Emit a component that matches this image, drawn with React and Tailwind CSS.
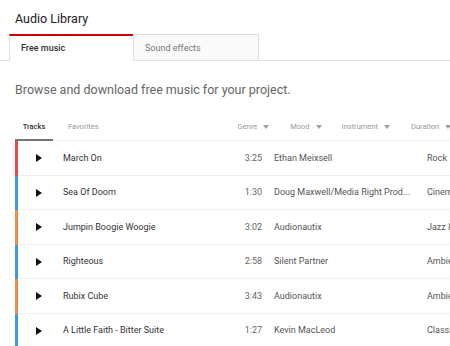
const tracks = [
  { title: 'March On', time: '3:25', artist: 'Ethan Meixsell', genre: 'Rock', bar: 'bg-[#e94a4a]' },
  { title: 'Sea Of Doom', time: '1:30', artist: 'Doug Maxwell/Media Right Prod...', genre: 'Cinematic', bar: 'bg-[#3a9be3]' },
  { title: 'Jumpin Boogie Woogie', time: '3:02', artist: 'Audionautix', genre: 'Jazz & Blues', bar: 'bg-[#ef8c4a]' },
  { title: 'Righteous', time: '2:58', artist: 'Silent Partner', genre: 'Ambient', bar: 'bg-[#3a9be3]' },
  { title: 'Rubix Cube', time: '3:43', artist: 'Audionautix', genre: 'Ambient', bar: 'bg-[#ef8c4a]' },
  { title: 'A Little Faith - Bitter Suite', time: '1:27', artist: 'Kevin MacLeod', genre: 'Classical', bar: 'bg-[#3a9be3]' },
];

const Caret = () => (
  <svg className="w-[6px] h-[4px] ml-[6px] shrink-0" viewBox="0 0 6 4">
    <path d="M0 0h6L3 4z" fill="#9e9e9e" />
  </svg>
);

const Play = () => (
  <svg className="w-[6px] h-[8px] shrink-0" viewBox="0 0 6 8">
    <path d="M0 0l6 4-6 4z" fill="#111" />
  </svg>
);

export default function App() {
  return (
    <div className="w-[450px] h-[346px] overflow-hidden bg-white font-['Roboto',sans-serif]">
      {/* Title */}
      <div className="h-[34px] pl-[15px] pt-[10px] text-[12.5px] leading-[18px] text-[#212121]">
        Audio Library
      </div>

      {/* Main tabs */}
      <div className="flex h-[27px] border-b border-[#e0e0e0] pl-[9px]">
        <div className="w-[124px] h-[27px] -mb-px bg-white border-t-2 border-t-[#cc0000] border-l border-l-[#e0e0e0] pl-[11px] pt-[6px] text-[9px] font-medium text-[#333]">
          Free music
        </div>
        <div className="w-[126px] h-[26px] bg-[#fafafa] border border-b-0 border-[#e0e0e0] pl-[11px] pt-[7px] text-[9px] text-[#777]">
          Sound effects
        </div>
      </div>

      {/* Description */}
      <div className="pl-[15px] pt-[20px] h-[56px] text-[12.5px] leading-[18px] text-[#666]">
        Browse and download free music for your project.
      </div>

      {/* Sub tabs + filters */}
      <div className="ml-[15px] flex items-start h-[24px] border-b border-[#eeeeee] text-[7.5px] text-[#999] whitespace-nowrap">
        <div className="w-[38px] h-[24px] shrink-0 border-b-2 border-[#757575] -mb-px pt-[4px] text-center text-[#333] font-medium">
          Tracks
        </div>
        <div className="ml-[15px] pt-[4px] shrink-0">Favorites</div>
        <div className="ml-[139px] pt-[4px] shrink-0 flex items-center">Genre<Caret /></div>
        <div className="ml-[21px] pt-[4px] shrink-0 flex items-center">Mood<Caret /></div>
        <div className="ml-[20px] pt-[4px] shrink-0 flex items-center">Instrument<Caret /></div>
        <div className="ml-[21px] pt-[4px] shrink-0 flex items-center">Duration<Caret /></div>
      </div>

      {/* Track rows */}
      <div className="ml-[15px]">
        {tracks.map((t) => (
          <div key={t.title} className="flex h-[34.5px]">
            <div className={`w-[3px] shrink-0 ${t.bar}`} />
            <div className="flex flex-1 min-w-0 items-center pt-[1px] border-b border-[#eeeeee] text-[9px] text-[#333] whitespace-nowrap overflow-hidden">
              <div className="w-[18px] shrink-0" />
              <Play />
              <div className="ml-[21px] w-[130px] shrink-0">{t.title}</div>
              <div className="w-[69px] shrink-0 text-right text-[#666]">{t.time}</div>
              <div className="ml-[12px] w-[153px] shrink-0 text-[#555]">{t.artist}</div>
              <div className="shrink-0 text-[#555]">{t.genre}</div>
            </div>
          </div>
        ))}
      </div>
    </div>
  );
}
